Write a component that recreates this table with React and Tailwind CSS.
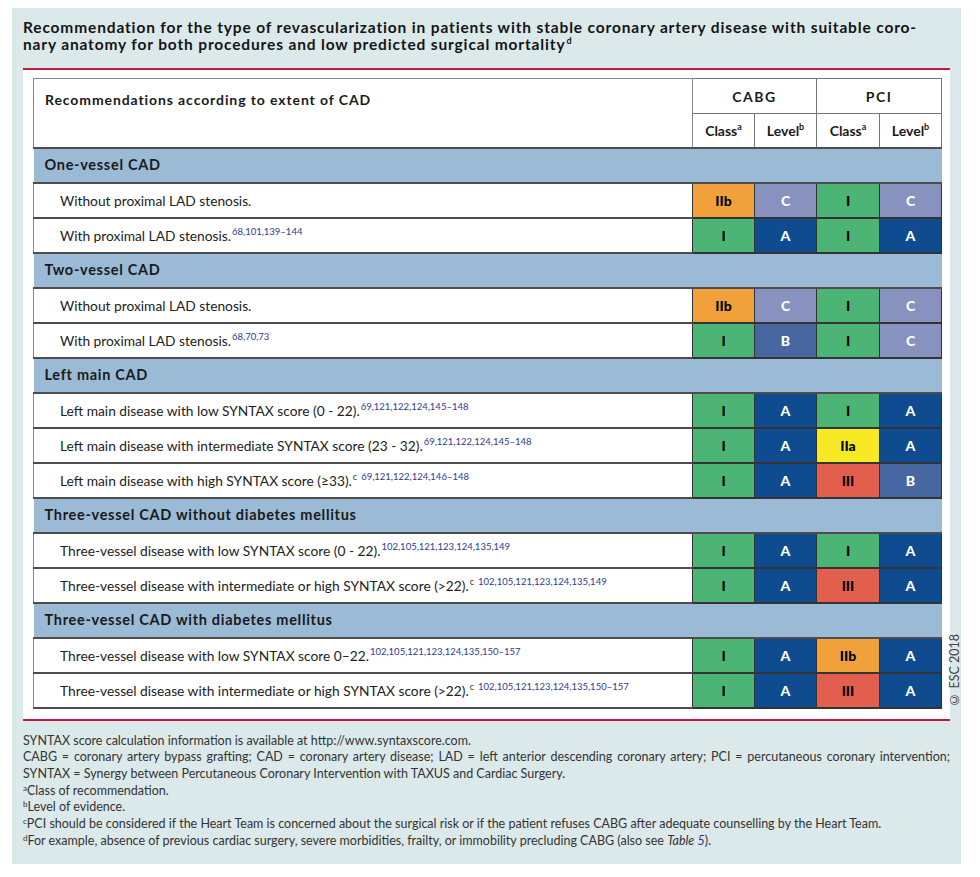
import React from "react";

const cellStyle = {
  I: "bg-[#4cb475] text-black",
  IIa: "bg-[#f7ea25] text-black",
  IIb: "bg-[#f0a13c] text-black",
  III: "bg-[#e35f4d] text-black",
  A: "bg-[#0f4c8f] text-white",
  B: "bg-[#4767a1] text-white",
  C: "bg-[#8792bf] text-white",
};

const sections = [
  {
    title: "One-vessel CAD",
    rows: [
      { text: "Without proximal LAD stenosis.", cells: ["IIb", "C", "I", "C"] },
      { text: "With proximal LAD stenosis.", refs: "68,101,139–144", cells: ["I", "A", "I", "A"] },
    ],
  },
  {
    title: "Two-vessel CAD",
    rows: [
      { text: "Without proximal LAD stenosis.", cells: ["IIb", "C", "I", "C"] },
      { text: "With proximal LAD stenosis.", refs: "68,70,73", cells: ["I", "B", "I", "C"] },
    ],
  },
  {
    title: "Left main CAD",
    rows: [
      { text: "Left main disease with low SYNTAX score (0 - 22).", refs: "69,121,122,124,145–148", cells: ["I", "A", "I", "A"] },
      { text: "Left main disease with intermediate SYNTAX score (23 - 32).", refs: "69,121,122,124,145–148", cells: ["I", "A", "IIa", "A"] },
      { text: "Left main disease with high SYNTAX score (≥33).", note: "c", refs: "69,121,122,124,146–148", cells: ["I", "A", "III", "B"] },
    ],
  },
  {
    title: "Three-vessel CAD without diabetes mellitus",
    rows: [
      { text: "Three-vessel disease with low SYNTAX score (0 - 22).", refs: "102,105,121,123,124,135,149", cells: ["I", "A", "I", "A"] },
      { text: "Three-vessel disease with intermediate or high SYNTAX score (>22).", note: "c", refs: "102,105,121,123,124,135,149", cells: ["I", "A", "III", "A"] },
    ],
  },
  {
    title: "Three-vessel CAD with diabetes mellitus",
    rows: [
      { text: "Three-vessel disease with low SYNTAX score 0–22.", refs: "102,105,121,123,124,135,150–157", cells: ["I", "A", "IIb", "A"] },
      { text: "Three-vessel disease with intermediate or high SYNTAX score (>22).", note: "c", refs: "102,105,121,123,124,135,150–157", cells: ["I", "A", "III", "A"] },
    ],
  },
];

export default function App() {
  return (
    <div className="w-[980px] h-[877px] bg-white pt-[8px] pl-[12px] font-['Lato',sans-serif]">
      <div className="w-[949px] h-[856px] bg-[#dce9ea] flex flex-col">
        <h1 className="px-[11px] pt-[11px] text-[15.5px] leading-[16.5px] tracking-[0.85px] font-bold text-[#151515] whitespace-nowrap">
          <span className="block">
            Recommendation for the type of revascularization in patients with stable coronary artery disease with suitable coro-
          </span>
          <span className="block">
            nary anatomy for both procedures and low predicted surgical mortality
            <sup className="text-[9px] -top-[6px] ml-[1px]">d</sup>
          </span>
        </h1>

        <div className="flex mt-[16px]">
          <div className="ml-[11px] w-[927px] bg-white border-y-2 border-[#c8193c] pt-[8px] pl-[10px] pb-[10px]">
            <table className="w-[908px] table-fixed border-collapse text-[#1a1a1a]">
              <colgroup>
                <col className="w-[659px]" />
                <col className="w-[62px]" />
                <col className="w-[62px]" />
                <col className="w-[63px]" />
                <col className="w-[62px]" />
              </colgroup>
              <thead>
                <tr className="h-[35px]">
                  <th rowSpan={2} className="border border-[#888] align-top text-left pl-[11px] pt-[10px] text-[14px] tracking-[0.9px] font-bold">
                    Recommendations according to extent of CAD
                  </th>
                  <th colSpan={2} className="border border-[#777] text-[14px] font-bold tracking-[1.5px]">CABG</th>
                  <th colSpan={2} className="border border-[#777] text-[14px] font-bold tracking-[1.5px]">PCI</th>
                </tr>
                <tr className="h-[34px]">
                  <th className="border border-[#777] text-[14px] font-bold">Class<sup className="text-[9px] -top-[6px]">a</sup></th>
                  <th className="border border-[#777] text-[14px] font-bold">Level<sup className="text-[9px] -top-[6px]">b</sup></th>
                  <th className="border border-[#777] text-[14px] font-bold">Class<sup className="text-[9px] -top-[6px]">a</sup></th>
                  <th className="border border-[#777] text-[14px] font-bold">Level<sup className="text-[9px] -top-[6px]">b</sup></th>
                </tr>
              </thead>
              <tbody>
                {sections.map((s) => (
                  <React.Fragment key={s.title}>
                    <tr className="h-[35px] bg-[#9bbad6]">
                      <td colSpan={5} className="border-y-2 border-[#4d4d4d] pl-[11px] text-[14.5px] tracking-[0.7px] font-bold">
                        {s.title}
                      </td>
                    </tr>
                    {s.rows.map((r, i) => (
                      <tr key={i} className="h-[35px]">
                        <td className="border-y-2 border-l border-[#4d4d4d] border-l-[#888] pl-[26px] pt-[2px] text-[13.75px] text-[#222]">
                          {r.text}
                          {r.note && <sup className="text-[9px] -top-[6px] text-[#333] ml-[1px]">{r.note}</sup>}
                          {r.refs && (
                            <sup className={`text-[9.5px] -top-[6px] text-[#2f3a8f] ${r.note ? "ml-[4px]" : "ml-[1px]"}`}>{r.refs}</sup>
                          )}
                        </td>
                        {r.cells.map((c, j) => (
                          <td
                            key={j}
                            className={`border-2 border-x border-[#333] text-center text-[14px] font-black ${cellStyle[c]}`}
                          >
                            {c}
                          </td>
                        ))}
                      </tr>
                    ))}
                  </React.Fragment>
                ))}
              </tbody>
            </table>
          </div>
          <div className="w-[11px] flex items-end pb-[14px]">
            <span className="[writing-mode:vertical-rl] rotate-180 text-[12.5px] leading-[11px] text-[#444] whitespace-nowrap -ml-[1px]">
              © ESC 2018
            </span>
          </div>
        </div>

        <div className="px-[11px] pt-[12px] text-[12.5px] leading-[16.7px] text-[#333]">
          <p>SYNTAX score calculation information is available at http://www.syntaxscore.com.</p>
          <p className="text-justify [text-align-last:left]">
            CABG = coronary artery bypass grafting; CAD = coronary artery disease; LAD = left anterior descending coronary artery; PCI = percutaneous coronary intervention; SYNTAX = Synergy between Percutaneous Coronary Intervention with TAXUS and Cardiac Surgery.
          </p>
          <p><sup className="text-[8px] -top-[4px]">a</sup>Class of recommendation.</p>
          <p><sup className="text-[8px] -top-[4px]">b</sup>Level of evidence.</p>
          <p>
            <sup className="text-[8px] -top-[4px]">c</sup>PCI should be considered if the Heart Team is concerned about the surgical risk or if the patient refuses CABG after adequate counselling by the Heart Team.
          </p>
          <p>
            <sup className="text-[8px] -top-[4px]">d</sup>For example, absence of previous cardiac surgery, severe morbidities, frailty, or immobility precluding CABG (also see <i>Table</i> <i className="text-[#2f3a8f]">5</i>).
          </p>
        </div>
      </div>
    </div>
  );
}
